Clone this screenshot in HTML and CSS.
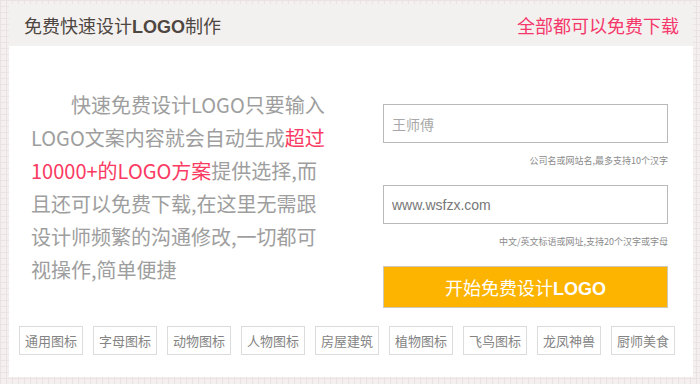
FILE: index.html
```html
<!DOCTYPE html>
<html lang="zh-CN">
<head>
  <meta charset="UTF-8" />
  <title>免费快速设计LOGO制作</title>
  <meta name="viewport" content="width=device-width, initial-scale=1.0" />
  <link rel="stylesheet" href="styles.css">
</head>
<body>
  <div class="card">
    <div class="card-head">
      <h1 class="title">免费快速设计<b>LOGO</b>制作</h1>
      <span class="free-tip">全部都可以免费下载</span>
    </div>

    <div class="card-main">
      <p class="intro">
        快速免费设计LOGO只要输入<br>
        LOGO文案内容就会自动生成<em>超过</em><br>
        <em>10000+的LOGO方案</em>提供选择,而<br>
        且还可以免费下载,在这里无需跟<br>
        设计师频繁的沟通修改,一切都可<br>
        视操作,简单便捷
      </p>

      <form class="logo-form" onsubmit="return false">
        <input class="field" type="text" placeholder="王师傅" />
        <div class="hint">公司名或网站名,最多支持10个汉字</div>
        <input class="field field-url" type="text" value="www.wsfzx.com" />
        <div class="hint">中文/英文标语或网址,支持20个汉字或字母</div>
        <button class="start-btn" type="submit">开始免费设计<b>LOGO</b></button>
      </form>
    </div>

    <div class="tags">
      <a class="tag" href="#">通用图标</a>
      <a class="tag" href="#">字母图标</a>
      <a class="tag" href="#">动物图标</a>
      <a class="tag" href="#">人物图标</a>
      <a class="tag" href="#">房屋建筑</a>
      <a class="tag" href="#">植物图标</a>
      <a class="tag" href="#">飞鸟图标</a>
      <a class="tag" href="#">龙凤神兽</a>
      <a class="tag" href="#">厨师美食</a>
    </div>
  </div>
</body>
</html>
```

FILE: styles.css
```css
* {
  box-sizing: border-box;
}

body {
  margin: 0;
  font-family: "Noto Sans CJK SC", "Liberation Sans", sans-serif;
  background-color: #f5f0f0;
  background-image:
    linear-gradient(#ebe2e2 1px, transparent 1px),
    linear-gradient(90deg, #ebe2e2 1px, transparent 1px);
  background-size: 6px 6px;
  height: 384px;
  overflow: hidden;
}

.card {
  width: 684px;
  height: 373px;
  margin: 4px 0 0 9px;
  background: #fff;
}

.card-head {
  height: 42px;
  display: flex;
  align-items: center;
  justify-content: space-between;
  padding: 0 14px 0 15px;
  background: #f3f1f0;
}

.title {
  margin: 0;
  font-size: 18px;
  font-weight: normal;
  color: #4e4640;
}

.title b {
  font-family: "Liberation Sans", sans-serif;
  font-weight: bold;
}

.free-tip {
  font-size: 18px;
  color: #f5386a;
}

.card-main {
  display: flex;
  align-items: flex-start;
}

.intro {
  width: 330px;
  margin: 42px 0 0 22px;
  font-size: 20px;
  line-height: 33px;
  text-indent: 40px;
  color: #9e9e9e;
}

.intro em {
  font-style: normal;
  color: #fa3a62;
}

.logo-form {
  width: 285px;
  margin: 58px 25px 0 auto;
  display: flex;
  flex-direction: column;
}

.field {
  height: 39px;
  padding: 0 8px;
  border: 1px solid #b9b9b9;
  font-family: "Noto Sans CJK SC", sans-serif;
  font-size: 14px;
  color: #777;
  outline: none;
}

.field::placeholder {
  color: #a8a8a8;
}

.field-url {
  margin-top: 17px;
  font-family: "Liberation Sans", sans-serif;
}

.hint {
  margin-top: 11px;
  font-size: 9px;
  line-height: 14px;
  text-align: right;
  color: #8a8a8a;
}

.start-btn {
  height: 42px;
  margin-top: 17px;
  border: 1px solid #d0c9b8;
  background: #fdb400;
  color: #fff;
  font-family: "Noto Sans CJK SC", sans-serif;
  font-size: 18px;
  cursor: pointer;
}

.start-btn b {
  font-family: "Liberation Sans", sans-serif;
}

.tags {
  display: flex;
  gap: 10px;
  margin-top: 18px;
  padding-left: 10px;
}

.tag {
  width: 64px;
  height: 29px;
  line-height: 27px;
  border: 1px solid #dcdcdc;
  text-align: center;
  font-size: 13px;
  color: #848484;
  text-decoration: none;
}
```
